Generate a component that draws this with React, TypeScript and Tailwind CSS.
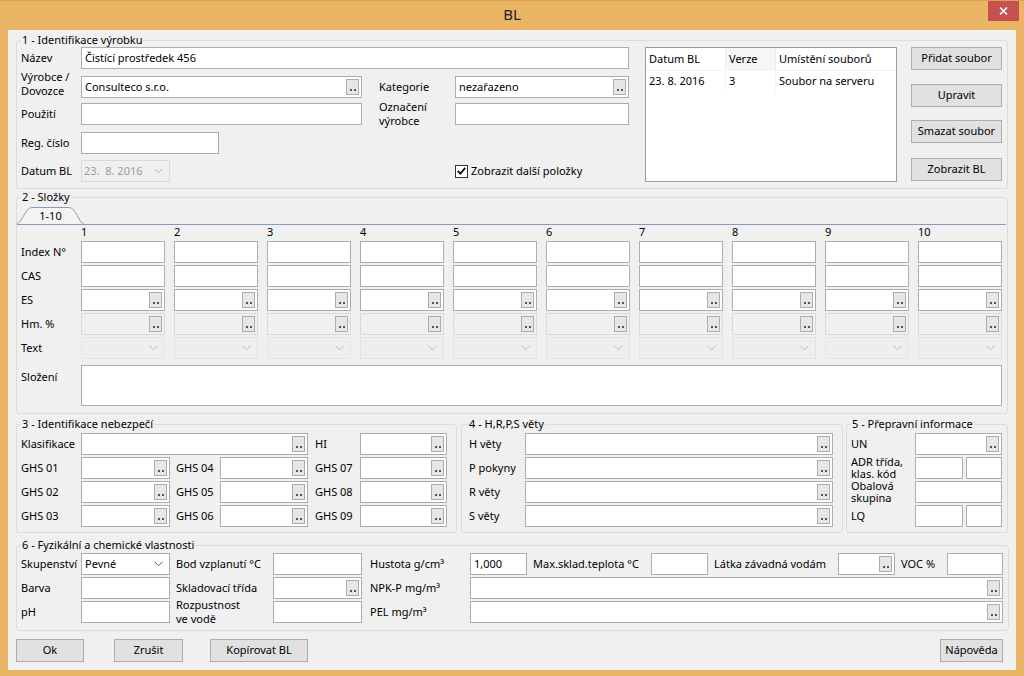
import React from "react";

function Dots() {
  return (
    <div className="shrink-0 w-[13px] h-[16px] mr-[2px] border border-[#ADADAD] bg-[#E6E6E6] flex items-end justify-center pb-[3px]">
      <div className="flex gap-[2px]">
        <div className="w-[2px] h-[2px] bg-[#555]" />
        <div className="w-[2px] h-[2px] bg-[#555]" />
      </div>
    </div>
  );
}

function Chev({ color }: { color: string }) {
  return (
    <svg width="9" height="6" viewBox="0 0 9 6" className="shrink-0">
      <path d="M0.5 0.8 L4.5 4.8 L8.5 0.8" fill="none" stroke={color} strokeWidth="1" />
    </svg>
  );
}

function Inp({ c = "", v, btn, dis }: { c?: string; v?: string; btn?: boolean; dis?: boolean }) {
  return (
    <div
      className={`h-[22px] shrink-0 border flex items-center ${
        dis ? "bg-[#F0F0F0] border-[#D9D9D9]" : "bg-white border-[#ABADB3]"
      } ${c}`}
    >
      <span className="flex-1 px-[3px] whitespace-nowrap overflow-hidden">{v}</span>
      {btn && <Dots />}
    </div>
  );
}

function DisCombo() {
  return (
    <div className="h-[22px] w-full border border-[#E3E3E3] bg-[#EEEEEE] flex items-center justify-end pr-[6px]">
      <Chev color="#B8B8B8" />
    </div>
  );
}

function Lbl({ c = "", children }: { c?: string; children: React.ReactNode }) {
  return <div className={`shrink-0 whitespace-nowrap ${c}`}>{children}</div>;
}

function Btn({ c = "", children }: { c?: string; children: React.ReactNode }) {
  return (
    <div
      className={`h-[23px] shrink-0 border border-[#ADADAD] bg-[#E1E1E1] flex items-center justify-center ${c}`}
    >
      {children}
    </div>
  );
}

function Group({ title, c = "", children }: { title: string; c?: string; children: React.ReactNode }) {
  return (
    <fieldset className={`border border-[#DCDCDC] rounded-[3px] ${c}`}>
      <legend className="px-[1px] leading-[14px]">{title}</legend>
      {children}
    </fieldset>
  );
}

export default function App() {
  const cols = ["1", "2", "3", "4", "5", "6", "7", "8", "9", "10"];
  return (
    <div className="w-[1024px] h-[676px] bg-[#EBB566] flex flex-col text-[11px] text-black font-['Noto_Sans',sans-serif] overflow-hidden">
      {/* title bar */}
      <div className="h-[30px] shrink-0 relative flex items-center justify-center border-t border-[#D9A352]">
        <span className="text-[15px] text-[#222] mt-[-2px]">BL</span>
        <div className="absolute right-[5px] top-0 w-[31px] h-[20px] bg-[#C75050] flex items-center justify-center">
          <svg width="9" height="8" viewBox="0 0 9 8">
            <path d="M1 0.5 L8 7.5 M8 0.5 L1 7.5" stroke="white" strokeWidth="1.6" />
          </svg>
        </div>
      </div>

      {/* client */}
      <div className="mx-[8px] h-[640px] shrink-0 bg-[#F0F0F0] pt-[3px] px-[8px] flex flex-col">
        {/* 1 */}
        <Group title="1 - Identifikace výrobku" c="h-[156px] pl-[4px] pr-[5px]">
          <div className="flex">
            <div className="w-[608px] flex flex-col shrink-0">
              <div className="h-[22px] flex items-center">
                <Lbl c="w-[60px]">Název</Lbl>
                <Inp c="w-[548px]" v="Čistící prostředek 456" />
              </div>
              <div className="mt-[1px] h-[28px] flex items-end">
                <Lbl c="w-[60px] leading-[14px]">
                  Výrobce /<br />
                  Dovozce
                </Lbl>
                <Inp c="w-[281px]" v="Consulteco s.r.o." btn />
                <Lbl c="w-[76px] ml-[17px] h-[22px] flex items-center">Kategorie</Lbl>
                <Inp c="w-[174px]" v="nezařazeno" btn />
              </div>
              <div className="mt-[2px] h-[28px] flex items-center">
                <Lbl c="w-[60px]">Použití</Lbl>
                <Inp c="w-[281px]" />
                <Lbl c="w-[76px] ml-[17px] leading-[14px]">
                  Označení
                  <br />
                  výrobce
                </Lbl>
                <Inp c="w-[174px]" />
              </div>
              <div className="mt-[4px] h-[22px] flex items-center">
                <Lbl c="w-[60px]">Reg. číslo</Lbl>
                <Inp c="w-[138px]" />
              </div>
              <div className="mt-[6px] h-[22px] flex items-center">
                <Lbl c="w-[60px]">Datum BL</Lbl>
                <div className="w-[89px] h-[22px] border border-[#D9D9D9] bg-[#F0F0F0] flex items-center pl-[2px] pr-[6px] text-[#9A9A9A]">
                  <span className="flex-1">23.&nbsp;&nbsp;8. 2016</span>
                  <Chev color="#B0B0B0" />
                </div>
                <div className="ml-[285px] flex items-center">
                  <div className="w-[13px] h-[13px] border border-[#333] bg-white flex items-center justify-center">
                    <svg width="9" height="8" viewBox="0 0 9 8">
                      <path d="M0.8 4 L3.4 6.6 L8.2 0.9" fill="none" stroke="#111" strokeWidth="1.8" />
                    </svg>
                  </div>
                  <span className="ml-[3px]">Zobrazit další položky</span>
                </div>
              </div>
            </div>

            {/* list */}
            <div className="ml-[16px] w-[252px] h-[135px] shrink-0 border border-[#9A9A9A] bg-white flex flex-col">
              <div className="h-[22px] flex">
                <div className="w-[80px] pl-[3px] flex items-center border-r border-[#F0F0F0]">Datum BL</div>
                <div className="w-[50px] pl-[3px] flex items-center bg-[#F6F6F6] border-r border-[#EAEAEA]">Verze</div>
                <div className="flex-1 pl-[3px] flex items-center">Umístění souborů</div>
              </div>
              <div className="h-[22px] flex border-t border-[#F4F4F4]">
                <div className="w-[80px] pl-[3px] flex items-center border-r border-[#F4F4F4]">23. 8. 2016</div>
                <div className="w-[50px] pl-[3px] flex items-center border-r border-[#F4F4F4]">3</div>
                <div className="flex-1 pl-[3px] flex items-center">Soubor na serveru</div>
              </div>
            </div>

            {/* buttons */}
            <div className="ml-[14px] flex flex-col">
              <Btn c="w-[91px]">Přidat soubor</Btn>
              <Btn c="w-[91px] mt-[14px]">Upravit</Btn>
              <Btn c="w-[91px] mt-[13px]">Smazat soubor</Btn>
              <Btn c="w-[91px] mt-[15px]">Zobrazit BL</Btn>
            </div>
          </div>
        </Group>

        {/* 2 */}
        <Group title="2 - Složky" c="mt-[1px] pl-[4px] pr-[5px] pb-[7px]">
          <div className="ml-[-4px] mr-[-4px] h-[21px] border-b border-[#8A9BBA] flex items-end">
            <div className="relative w-[67px] h-[17px] flex items-center justify-center">
              <svg width="67" height="17" viewBox="0 0 67 17" className="absolute inset-0">
                <path
                  d="M0 16.5 C5 16.5 8 0.5 15 0.5 L52 0.5 C59 0.5 62 16.5 66.5 16.5"
                  fill="#F4F4F4"
                  stroke="#8A9BBA"
                  strokeWidth="1"
                />
              </svg>
              <span className="relative mt-[1px]">1-10</span>
            </div>
          </div>
          <div className="grid grid-cols-[51px_repeat(10,84px)] grid-rows-[14px_repeat(5,22px)] gap-x-[9px] gap-y-[2px]">
            <div />
            {cols.map((n) => (
              <div key={n} className="leading-[14px]">
                {n}
              </div>
            ))}
            <div className="flex items-center whitespace-nowrap">Index N°</div>
            {cols.map((n) => (
              <Inp key={n} c="w-full" />
            ))}
            <div className="flex items-center">CAS</div>
            {cols.map((n) => (
              <Inp key={n} c="w-full" />
            ))}
            <div className="flex items-center">ES</div>
            {cols.map((n) => (
              <Inp key={n} c="w-full" btn />
            ))}
            <div className="flex items-center whitespace-nowrap">Hm. %</div>
            {cols.map((n) => (
              <Inp key={n} c="w-full" btn dis />
            ))}
            <div className="flex items-center">Text</div>
            {cols.map((n) => (
              <DisCombo key={n} />
            ))}
          </div>
          <div className="mt-[6px] flex">
            <Lbl c="w-[60px] pt-[4px]">Složení</Lbl>
            <div className="w-[921px] h-[41px] border border-[#ABADB3] bg-white" />
          </div>
        </Group>

        {/* 3,4,5 */}
        <div className="mt-[3px] flex">
          <Group title="3 - Identifikace nebezpečí" c="w-[441px] shrink-0 pl-[4px] pb-[5px]">
            <div className="mt-[2px] flex flex-col gap-[2px]">
              <div className="flex items-center">
                <Lbl c="w-[60px]">Klasifikace</Lbl>
                <Inp c="w-[227px]" btn />
                <Lbl c="w-[45px] ml-[7px]">HI</Lbl>
                <Inp c="w-[87px]" btn />
              </div>
              {[
                ["GHS 01", "GHS 04", "GHS 07"],
                ["GHS 02", "GHS 05", "GHS 08"],
                ["GHS 03", "GHS 06", "GHS 09"],
              ].map((r) => (
                <div key={r[0]} className="flex items-center">
                  <Lbl c="w-[60px]">{r[0]}</Lbl>
                  <Inp c="w-[89px]" btn />
                  <Lbl c="w-[44px] ml-[6px]">{r[1]}</Lbl>
                  <Inp c="w-[88px]" btn />
                  <Lbl c="w-[45px] ml-[7px]">{r[2]}</Lbl>
                  <Inp c="w-[87px]" btn />
                </div>
              ))}
            </div>
          </Group>
          <Group title="4 - H,R,P,S věty" c="ml-[4px] w-[382px] shrink-0 pl-[6px] pb-[5px]">
            <div className="mt-[2px] flex flex-col gap-[2px]">
              {["H věty", "P pokyny", "R věty", "S věty"].map((l) => (
                <div key={l} className="flex items-center">
                  <Lbl c="w-[57px] pl-[1px]">{l}</Lbl>
                  <Inp c="w-[308px]" btn />
                </div>
              ))}
            </div>
          </Group>
          <Group title="5 - Přepravní informace" c="ml-[3px] w-[162px] shrink-0 pl-[4px] pb-[5px]">
            <div className="mt-[2px] flex flex-col gap-[2px]">
              <div className="flex items-center">
                <Lbl c="w-[64px]">UN</Lbl>
                <Inp c="w-[87px]" btn />
              </div>
              <div className="flex items-center">
                <Lbl c="w-[64px] h-[22px] flex flex-col justify-center leading-[12px]">
                  <span>ADR třída,</span>
                  <span>klas. kód</span>
                </Lbl>
                <Inp c="w-[48px]" />
                <Inp c="w-[36px] ml-[3px]" />
              </div>
              <div className="flex items-center">
                <Lbl c="w-[64px] h-[22px] flex flex-col justify-center leading-[12px]">
                  <span>Obalová</span>
                  <span>skupina</span>
                </Lbl>
                <Inp c="w-[87px]" />
              </div>
              <div className="flex items-center">
                <Lbl c="w-[64px]">LQ</Lbl>
                <Inp c="w-[48px]" />
                <Inp c="w-[36px] ml-[3px]" />
              </div>
            </div>
          </Group>
        </div>

        {/* 6 */}
        <Group title="6 - Fyzikální a chemické vlastnosti" c="mt-[5px] pl-[4px] pr-[5px] pb-[7px]">
          <div className="mt-[1px] flex flex-col gap-[2px]">
            <div className="flex items-center">
              <Lbl c="w-[60px]">Skupenství</Lbl>
              <div className="w-[89px] h-[22px] border border-[#ABADB3] bg-white flex items-center pl-[3px] pr-[6px]">
                <span className="flex-1">Pevné</span>
                <Chev color="#555" />
              </div>
              <Lbl c="w-[97px] ml-[6px]">Bod vzplanutí °C</Lbl>
              <Inp c="w-[89px]" />
              <Lbl c="w-[100px] ml-[8px]">Hustota g/cm³</Lbl>
              <Inp c="w-[57px]" v="1,000" />
              <Lbl c="w-[118px] ml-[6px]">Max.sklad.teplota °C</Lbl>
              <Inp c="w-[57px]" />
              <Lbl c="w-[124px] ml-[6px]">Látka závadná vodám</Lbl>
              <Inp c="w-[57px]" btn />
              <Lbl c="w-[46px] ml-[6px]">VOC %</Lbl>
              <Inp c="w-[56px]" />
            </div>
            <div className="flex items-center">
              <Lbl c="w-[60px]">Barva</Lbl>
              <Inp c="w-[89px]" />
              <Lbl c="w-[97px] ml-[6px]">Skladovací třída</Lbl>
              <Inp c="w-[89px]" btn />
              <Lbl c="w-[100px] ml-[8px]">NPK-P mg/m³</Lbl>
              <Inp c="w-[533px]" btn />
            </div>
            <div className="flex items-center">
              <Lbl c="w-[60px]">pH</Lbl>
              <Inp c="w-[89px]" />
              <Lbl c="w-[97px] ml-[6px] h-[22px] flex flex-col justify-center leading-[14px]">
                <span>Rozpustnost</span>
                <span>ve vodě</span>
              </Lbl>
              <Inp c="w-[89px]" />
              <Lbl c="w-[100px] ml-[8px]">PEL mg/m³</Lbl>
              <Inp c="w-[533px]" btn />
            </div>
          </div>
        </Group>

        {/* bottom buttons */}
        <div className="mt-[8px] flex">
          <Btn c="w-[68px]">Ok</Btn>
          <Btn c="w-[69px] ml-[30px]">Zrušit</Btn>
          <Btn c="w-[98px] ml-[27px]">Kopírovat BL</Btn>
          <Btn c="w-[63px] ml-auto mr-[5px]">Nápověda</Btn>
        </div>
      </div>
    </div>
  );
}
